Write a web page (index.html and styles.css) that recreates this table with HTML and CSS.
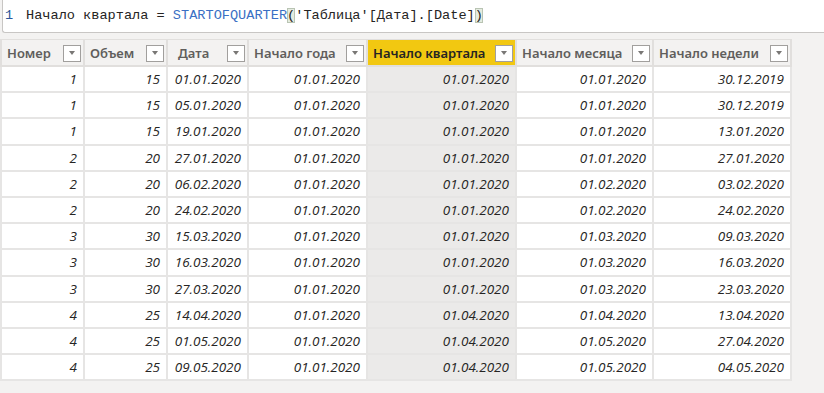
FILE: index.html
```html
<!DOCTYPE html>
<html lang="ru">
<head>
    <meta charset="UTF-8">
    <title>Начало квартала</title>
    <link rel="stylesheet" href="styles.css">
</head>
<body>

    <!-- Formula bar -->
    <div class="formula-bar">
        <span class="line-no">1</span>
        <span class="formula">Начало квартала = <span class="fn">STARTOFQUARTER</span><span class="brace">(</span>'Таблица'[Дата].[Date]<span class="brace">)</span></span>
    </div>

    <div class="grid-wrap">
        <table class="data-table">
            <colgroup>
                <col style="width: 83px">
                <col style="width: 83px">
                <col style="width: 81px">
                <col style="width: 119px">
                <col style="width: 149px">
                <col style="width: 137px">
                <col style="width: 138px">
            </colgroup>
            <thead>
                <tr>
                    <th><div class="head"><span>Номер</span><i class="drop"></i></div></th>
                    <th><div class="head"><span>Объем</span><i class="drop"></i></div></th>
                    <th><div class="head head-center"><span>Дата</span><i class="drop"></i></div></th>
                    <th><div class="head"><span>Начало года</span><i class="drop"></i></div></th>
                    <th class="selected"><div class="head"><span>Начало квартала</span><i class="drop"></i></div></th>
                    <th><div class="head"><span>Начало месяца</span><i class="drop"></i></div></th>
                    <th><div class="head"><span>Начало недели</span><i class="drop"></i></div></th>
                </tr>
            </thead>
            <tbody id="rows"></tbody>
        </table>
    </div>

    <script>
        const rows = [
            [1, 15, "01.01.2020", "01.01.2020", "01.01.2020", "01.01.2020", "30.12.2019"],
            [1, 15, "05.01.2020", "01.01.2020", "01.01.2020", "01.01.2020", "30.12.2019"],
            [1, 15, "19.01.2020", "01.01.2020", "01.01.2020", "01.01.2020", "13.01.2020"],
            [2, 20, "27.01.2020", "01.01.2020", "01.01.2020", "01.01.2020", "27.01.2020"],
            [2, 20, "06.02.2020", "01.01.2020", "01.01.2020", "01.02.2020", "03.02.2020"],
            [2, 20, "24.02.2020", "01.01.2020", "01.01.2020", "01.02.2020", "24.02.2020"],
            [3, 30, "15.03.2020", "01.01.2020", "01.01.2020", "01.03.2020", "09.03.2020"],
            [3, 30, "16.03.2020", "01.01.2020", "01.01.2020", "01.03.2020", "16.03.2020"],
            [3, 30, "27.03.2020", "01.01.2020", "01.01.2020", "01.03.2020", "23.03.2020"],
            [4, 25, "14.04.2020", "01.01.2020", "01.04.2020", "01.04.2020", "13.04.2020"],
            [4, 25, "01.05.2020", "01.01.2020", "01.04.2020", "01.05.2020", "27.04.2020"],
            [4, 25, "09.05.2020", "01.01.2020", "01.04.2020", "01.05.2020", "04.05.2020"]
        ];

        const body = document.getElementById("rows");
        rows.forEach(row => {
            const tr = document.createElement("tr");
            row.forEach((value, i) => {
                const td = document.createElement("td");
                td.textContent = value;
                if (i === 4) td.className = "selected";
                tr.appendChild(td);
            });
            body.appendChild(tr);
        });
    </script>

</body>
</html>
```

FILE: styles.css
```css
/* Base */
body {
    margin: 0;
    background-color: #f3f2f1;
    font-family: 'Noto Sans', 'Open Sans', sans-serif;
    color: #252423;
}

/* Formula bar */
.formula-bar {
    height: 33px;
    margin-left: 2px;
    background-color: #ffffff;
    border-left: 1px solid #c8c6c4;
    border-bottom: 1px solid #c8c6c4;
    border-bottom-left-radius: 3px;
    display: flex;
    align-items: center;
    font-family: 'Liberation Mono', 'DejaVu Sans Mono', monospace;
    font-size: 13.6px;
    color: #252423;
    box-sizing: border-box;
    padding-bottom: 2px;
}

.line-no {
    color: #2b579a;
    width: 21px;
    padding-left: 2px;
}

.fn {
    color: #3a6fc4;
}

.brace {
    background-color: #e4ebe0;
    outline: 1px solid #b9c4b3;
    outline-offset: -1px;
}

/* Data grid */
.grid-wrap {
    padding-top: 6px;
}

.data-table {
    border-collapse: collapse;
    table-layout: fixed;
    width: 790px;
    font-size: 13px;
}

th {
    height: 25px;
    padding: 0;
    border: 2px solid #e1dfdd;
    border-top-width: 1px;
    background-color: #f3f2f1;
    color: #605e5c;
    font-weight: 600;
    text-align: left;
}

th.selected {
    background-color: #f2c811;
    color: #252423;
}

.head {
    display: flex;
    align-items: center;
    justify-content: space-between;
    padding: 0 2px 0 5px;
}

.head-center {
    padding-left: 10px;
}

.drop {
    width: 16px;
    height: 15px;
    border: 1px solid #a19f9d;
    background-color: #ffffff;
    position: relative;
    margin-top: 1px;
}

.drop::after {
    content: "";
    position: absolute;
    left: 5px;
    top: 5px;
    border-left: 3.5px solid transparent;
    border-right: 3.5px solid transparent;
    border-top: 4px solid #797775;
}

td {
    height: 24.2px;
    padding: 0 6px 0 4px;
    border: 2px solid #e6e5e4;
    background-color: #ffffff;
    text-align: right;
    font-family: 'Open Sans', 'DejaVu Sans', sans-serif;
    font-size: 13.5px;
    font-style: italic;
    white-space: nowrap;
}

td.selected {
    background-color: #ebeae9;
}
```
